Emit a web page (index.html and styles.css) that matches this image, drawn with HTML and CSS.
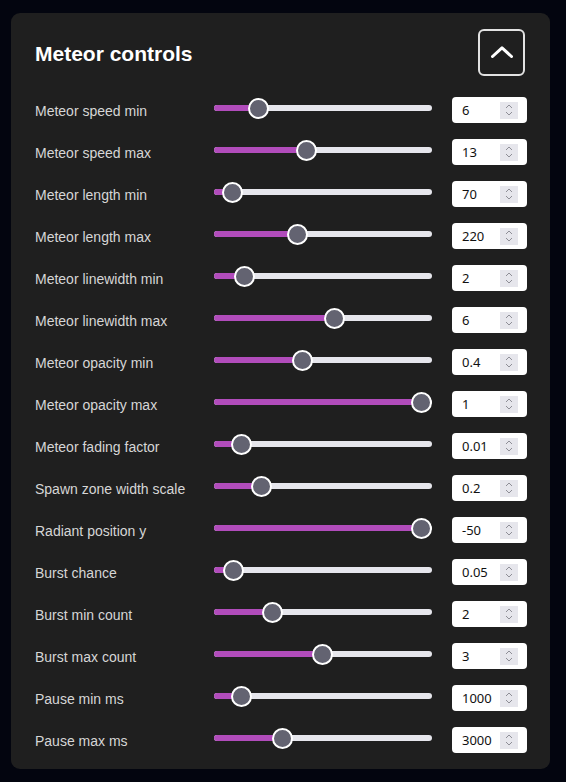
FILE: index.html
```html
<!DOCTYPE html>
<html lang="en">
<head>
<meta charset="utf-8">
<title>Meteor controls</title>
<link rel="stylesheet" href="styles.css">
</head>
<body>
<section class="panel">
  <header class="panel-header">
    <h2 class="panel-title">Meteor controls</h2>
    <button class="collapse-btn" aria-label="Collapse">
      <svg width="22" height="12" viewBox="0 0 22 12"><path d="M1.5 10.5 L11 1.8 L20.5 10.5" fill="none" stroke="#fff" stroke-width="3" stroke-linecap="round" stroke-linejoin="round"/></svg>
    </button>
  </header>
  <div class="rows">
    <div class="row"><span class="label">Meteor speed min</span><div class="slider"><div class="track"><div class="fill" style="--p:0.174"></div><div class="thumb" style="--p:0.174"></div></div></div><div class="num"><span class="num-val">6</span><span class="spin"><svg width="10" height="14" viewBox="0 0 10 14"><path d="M2 5 L5 2 L8 5 M2 9 L5 12 L8 9" fill="none" stroke="#8e8e96" stroke-width="1"/></svg></span></div></div>
    <div class="row"><span class="label">Meteor speed max</span><div class="slider"><div class="track"><div class="fill" style="--p:0.414"></div><div class="thumb" style="--p:0.414"></div></div></div><div class="num"><span class="num-val">13</span><span class="spin"><svg width="10" height="14" viewBox="0 0 10 14"><path d="M2 5 L5 2 L8 5 M2 9 L5 12 L8 9" fill="none" stroke="#8e8e96" stroke-width="1"/></svg></span></div></div>
    <div class="row"><span class="label">Meteor length min</span><div class="slider"><div class="track"><div class="fill" style="--p:0.043"></div><div class="thumb" style="--p:0.043"></div></div></div><div class="num"><span class="num-val">70</span><span class="spin"><svg width="10" height="14" viewBox="0 0 10 14"><path d="M2 5 L5 2 L8 5 M2 9 L5 12 L8 9" fill="none" stroke="#8e8e96" stroke-width="1"/></svg></span></div></div>
    <div class="row"><span class="label">Meteor length max</span><div class="slider"><div class="track"><div class="fill" style="--p:0.373"></div><div class="thumb" style="--p:0.373"></div></div></div><div class="num"><span class="num-val">220</span><span class="spin"><svg width="10" height="14" viewBox="0 0 10 14"><path d="M2 5 L5 2 L8 5 M2 9 L5 12 L8 9" fill="none" stroke="#8e8e96" stroke-width="1"/></svg></span></div></div>
    <div class="row"><span class="label">Meteor linewidth min</span><div class="slider"><div class="track"><div class="fill" style="--p:0.104"></div><div class="thumb" style="--p:0.104"></div></div></div><div class="num"><span class="num-val">2</span><span class="spin"><svg width="10" height="14" viewBox="0 0 10 14"><path d="M2 5 L5 2 L8 5 M2 9 L5 12 L8 9" fill="none" stroke="#8e8e96" stroke-width="1"/></svg></span></div></div>
    <div class="row"><span class="label">Meteor linewidth max</span><div class="slider"><div class="track"><div class="fill" style="--p:0.556"></div><div class="thumb" style="--p:0.556"></div></div></div><div class="num"><span class="num-val">6</span><span class="spin"><svg width="10" height="14" viewBox="0 0 10 14"><path d="M2 5 L5 2 L8 5 M2 9 L5 12 L8 9" fill="none" stroke="#8e8e96" stroke-width="1"/></svg></span></div></div>
    <div class="row"><span class="label">Meteor opacity min</span><div class="slider"><div class="track"><div class="fill" style="--p:0.398"></div><div class="thumb" style="--p:0.398"></div></div></div><div class="num"><span class="num-val">0.4</span><span class="spin"><svg width="10" height="14" viewBox="0 0 10 14"><path d="M2 5 L5 2 L8 5 M2 9 L5 12 L8 9" fill="none" stroke="#8e8e96" stroke-width="1"/></svg></span></div></div>
    <div class="row"><span class="label">Meteor opacity max</span><div class="slider"><div class="track"><div class="fill" style="--p:1"></div><div class="thumb" style="--p:1"></div></div></div><div class="num"><span class="num-val">1</span><span class="spin"><svg width="10" height="14" viewBox="0 0 10 14"><path d="M2 5 L5 2 L8 5 M2 9 L5 12 L8 9" fill="none" stroke="#8e8e96" stroke-width="1"/></svg></span></div></div>
    <div class="row"><span class="label">Meteor fading factor</span><div class="slider"><div class="track"><div class="fill" style="--p:0.084"></div><div class="thumb" style="--p:0.084"></div></div></div><div class="num"><span class="num-val">0.01</span><span class="spin"><svg width="10" height="14" viewBox="0 0 10 14"><path d="M2 5 L5 2 L8 5 M2 9 L5 12 L8 9" fill="none" stroke="#8e8e96" stroke-width="1"/></svg></span></div></div>
    <div class="row"><span class="label">Spawn zone width scale</span><div class="slider"><div class="track"><div class="fill" style="--p:0.19"></div><div class="thumb" style="--p:0.19"></div></div></div><div class="num"><span class="num-val">0.2</span><span class="spin"><svg width="10" height="14" viewBox="0 0 10 14"><path d="M2 5 L5 2 L8 5 M2 9 L5 12 L8 9" fill="none" stroke="#8e8e96" stroke-width="1"/></svg></span></div></div>
    <div class="row"><span class="label">Radiant position y</span><div class="slider"><div class="track"><div class="fill" style="--p:1"></div><div class="thumb" style="--p:1"></div></div></div><div class="num"><span class="num-val">-50</span><span class="spin"><svg width="10" height="14" viewBox="0 0 10 14"><path d="M2 5 L5 2 L8 5 M2 9 L5 12 L8 9" fill="none" stroke="#8e8e96" stroke-width="1"/></svg></span></div></div>
    <div class="row"><span class="label">Burst chance</span><div class="slider"><div class="track"><div class="fill" style="--p:0.048"></div><div class="thumb" style="--p:0.048"></div></div></div><div class="num"><span class="num-val">0.05</span><span class="spin"><svg width="10" height="14" viewBox="0 0 10 14"><path d="M2 5 L5 2 L8 5 M2 9 L5 12 L8 9" fill="none" stroke="#8e8e96" stroke-width="1"/></svg></span></div></div>
    <div class="row"><span class="label">Burst min count</span><div class="slider"><div class="track"><div class="fill" style="--p:0.246"></div><div class="thumb" style="--p:0.246"></div></div></div><div class="num"><span class="num-val">2</span><span class="spin"><svg width="10" height="14" viewBox="0 0 10 14"><path d="M2 5 L5 2 L8 5 M2 9 L5 12 L8 9" fill="none" stroke="#8e8e96" stroke-width="1"/></svg></span></div></div>
    <div class="row"><span class="label">Burst max count</span><div class="slider"><div class="track"><div class="fill" style="--p:0.495"></div><div class="thumb" style="--p:0.495"></div></div></div><div class="num"><span class="num-val">3</span><span class="spin"><svg width="10" height="14" viewBox="0 0 10 14"><path d="M2 5 L5 2 L8 5 M2 9 L5 12 L8 9" fill="none" stroke="#8e8e96" stroke-width="1"/></svg></span></div></div>
    <div class="row"><span class="label">Pause min ms</span><div class="slider"><div class="track"><div class="fill" style="--p:0.084"></div><div class="thumb" style="--p:0.084"></div></div></div><div class="num"><span class="num-val">1000</span><span class="spin"><svg width="10" height="14" viewBox="0 0 10 14"><path d="M2 5 L5 2 L8 5 M2 9 L5 12 L8 9" fill="none" stroke="#8e8e96" stroke-width="1"/></svg></span></div></div>
    <div class="row"><span class="label">Pause max ms</span><div class="slider"><div class="track"><div class="fill" style="--p:0.292"></div><div class="thumb" style="--p:0.292"></div></div></div><div class="num"><span class="num-val">3000</span><span class="spin"><svg width="10" height="14" viewBox="0 0 10 14"><path d="M2 5 L5 2 L8 5 M2 9 L5 12 L8 9" fill="none" stroke="#8e8e96" stroke-width="1"/></svg></span></div></div>
  </div>
</section>
</body>
</html>
```
FILE: styles.css
```css
* { box-sizing: border-box; }
html, body { margin: 0; padding: 0; }
body {
  background: #03050f;
  width: 566px;
  height: 782px;
  overflow: hidden;
  font-family: "Liberation Sans", Arial, sans-serif;
}
.panel {
  margin: 13px 0 0 11px;
  width: 539px;
  height: 756px;
  background: #1f1f1f;
  border-radius: 9px;
  padding: 16px 23px 16px 24px;
}
.panel-header {
  display: flex;
  align-items: center;
  justify-content: space-between;
  height: 47px;
  margin-bottom: 21px;
}
.panel-title {
  margin: 0;
  padding-top: 2px;
  color: #ffffff;
  font-size: 21px;
  font-weight: 700;
}
.collapse-btn {
  width: 47px;
  height: 47px;
  margin-right: 2px;
  border: 2px solid #e2e2e2;
  border-radius: 6px;
  background: transparent;
  padding: 0 0 2px 0;
  display: flex;
  align-items: center;
  justify-content: center;
}
.rows {
  display: flex;
  flex-direction: column;
  gap: 16px;
}
.row {
  display: grid;
  grid-template-columns: 179px 218px 75px;
  column-gap: 0;
  align-items: center;
  height: 26px;
}
.row { grid-template-columns: 179px 218px 95px; }
.label {
  color: #d6d6d6;
  font-size: 14px;
  padding-top: 2px;
}
.slider {
  align-self: start;
  height: 22px;
  display: flex;
  align-items: center;
}
.track {
  position: relative;
  width: 218px;
  height: 6px;
  border-radius: 3px;
  background: #e6e6ec;
}
.fill {
  height: 6px;
  border-radius: 3px 0 0 3px;
  background: #b14cbb;
  width: calc(197px * var(--p) + 10.5px);
}
.thumb {
  position: absolute;
  top: 50%;
  left: calc(197px * var(--p));
  width: 21px;
  height: 21px;
  margin-top: -10.5px;
  border-radius: 50%;
  background: #636371;
  border: 2px solid #ffffff;
}
.num {
  margin-left: 20px;
  width: 75px;
  height: 26px;
  background: #ffffff;
  border-radius: 4px;
  display: flex;
  align-items: center;
  justify-content: space-between;
  padding: 0 9px 0 10px;
}
.num-val {
  font-family: "Noto Sans", "Open Sans", sans-serif;
  font-size: 13px;
  color: #111111;
}
.spin {
  width: 18px;
  height: 17px;
  background: #e6e6ec;
  display: flex;
  align-items: center;
  justify-content: center;
}
```
